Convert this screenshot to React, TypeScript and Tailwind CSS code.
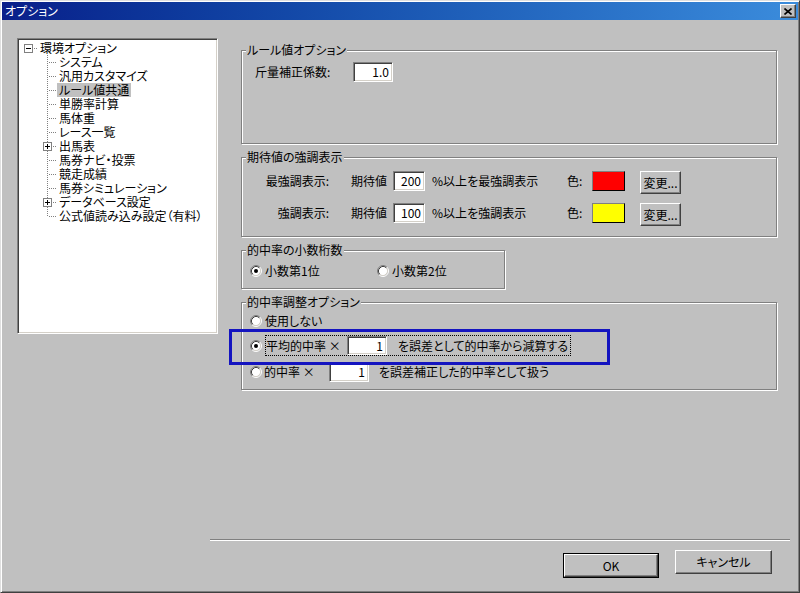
import { ReactNode } from 'react'

// win2k style bevels
const sunken =
  "border border-t-[#808080] border-l-[#808080] border-r-white border-b-white shadow-[inset_1px_1px_0_#404040,inset_-1px_-1px_0_#d4d0c8]"
const raised =
  "border border-t-white border-l-white border-r-[#404040] border-b-[#404040] shadow-[inset_-1px_-1px_0_#808080]"

type Node = { label: string; plus?: boolean; selected?: boolean }

const children: Node[] = [
  { label: "システム" },
  { label: "汎用カスタマイズ" },
  { label: "ルール値共通", selected: true },
  { label: "単勝率計算" },
  { label: "馬体重" },
  { label: "レース一覧" },
  { label: "出馬表", plus: true },
  { label: "馬券ナビ・投票" },
  { label: "競走成績" },
  { label: "馬券シミュレーション" },
  { label: "データベース設定", plus: true },
  { label: "公式値読み込み設定（有料）" },
]

function Radio({ checked }: { checked?: boolean }) {
  return (
    <svg width="12" height="12" viewBox="0 0 12 12" className="shrink-0">
      <circle cx="6" cy="6" r="4.5" fill="#fff" />
      <path d="M2.11 9.89A5.5 5.5 0 0 1 9.89 2.11" stroke="#808080" fill="none" />
      <path d="M9.89 2.11A5.5 5.5 0 0 1 2.11 9.89" stroke="#fff" fill="none" />
      <path d="M2.82 9.18A4.5 4.5 0 0 1 9.18 2.82" stroke="#404040" fill="none" />
      <path d="M9.18 2.82A4.5 4.5 0 0 1 2.82 9.18" stroke="#d4d0c8" fill="none" />
      {checked && <circle cx="6" cy="6" r="2" fill="#000" />}
    </svg>
  )
}

function TreeRow({ node, last }: { node: Node; last: boolean }) {
  return (
    <div className="flex h-[14px] items-center">
      <svg width="38" height="14" viewBox="0 0 38 14" className="shrink-0" shapeRendering="crispEdges">
        <line x1="28.5" y1="0" x2="28.5" y2={last ? 8 : 14} stroke="#808080" strokeDasharray="1 1" />
        <line x1="30" y1="7.5" x2="38" y2="7.5" stroke="#808080" strokeDasharray="1 1" />
        {node.plus && (
          <>
            <rect x="24.5" y="3.5" width="8" height="8" fill="#fff" stroke="#808080" />
            <line x1="26" y1="7.5" x2="31" y2="7.5" stroke="#000" />
            <line x1="28.5" y1="5" x2="28.5" y2="10" stroke="#000" />
          </>
        )}
      </svg>
      <span className={`h-[14px] whitespace-nowrap px-[2px] leading-[14px] ${node.selected ? "bg-[#c0c0c0]" : ""}`}>
        {node.label}
      </span>
    </div>
  )
}

function Tree() {
  return (
    <div className={`mt-[18px] h-[296px] w-[201px] shrink-0 bg-white pl-px pt-[2px] ${sunken}`}>
      <div className="flex h-[14px] items-center">
        <svg width="19" height="14" viewBox="0 0 19 14" className="shrink-0" shapeRendering="crispEdges">
          <rect x="5.5" y="3.5" width="8" height="8" fill="#fff" stroke="#808080" />
          <line x1="7" y1="7.5" x2="12" y2="7.5" stroke="#000" />
          <line x1="15" y1="7.5" x2="19" y2="7.5" stroke="#808080" strokeDasharray="1 1" />
        </svg>
        <span className="px-[2px] leading-[14px]">環境オプション</span>
      </div>
      {children.map((n, i) => (
        <TreeRow key={n.label} node={n} last={i === children.length - 1} />
      ))}
    </div>
  )
}

function Group({ title, className, children }: { title: string; className: string; children?: ReactNode }) {
  return (
    <div className={`border border-[#808080] shadow-[inset_1px_1px_0_#fff,1px_1px_0_#fff] ${className}`}>
      <div className="-mt-[8px] ml-[4px] w-fit bg-[#c0c0c0] px-px leading-[14px] whitespace-nowrap">{title}</div>
      {children}
    </div>
  )
}

function Field({ value, className }: { value: string; className: string }) {
  return (
    <div className={`flex shrink-0 items-center justify-end bg-white pr-[3px] ${sunken} ${className}`}>{value}</div>
  )
}

function Button({ children, className }: { children: ReactNode; className: string }) {
  return <div className={`flex shrink-0 items-center justify-center bg-[#c0c0c0] ${raised} ${className}`}>{children}</div>
}

function HighlightRow({ label, value, text, swatch }: { label: string; value: string; text: string; swatch: string }) {
  return (
    <div className="flex h-[22px] items-start">
      <div className="w-[87px] shrink-0 text-right leading-[20px]">{label}</div>
      <div className="ml-[22px] w-[42px] shrink-0 leading-[20px]">期待値</div>
      <Field value={value} className="h-[20px] w-[32px]" />
      <div className="ml-[7px] w-[135px] shrink-0 whitespace-nowrap leading-[20px]">{text}</div>
      <div className="w-[25px] shrink-0 leading-[20px]">色:</div>
      <div className={`h-[20px] w-[33px] shrink-0 border border-t-[#808080] border-l-[#808080] border-r-black border-b-black ${swatch}`} />
      <Button className="ml-[15px] h-[23px] w-[41px]">変更...</Button>
    </div>
  )
}

export default function App() {
  return (
    <div className="relative flex h-[593px] w-[800px] flex-col border border-t-[#dfdfdf] border-l-[#dfdfdf] border-r-[#404040] border-b-[#404040] bg-[#c0c0c0] p-px font-['Noto_Sans_CJK_JP',sans-serif] text-[12px] leading-[14px] text-black shadow-[inset_1px_1px_0_#fff,inset_-1px_-1px_0_#808080] [font-feature-settings:'palt']">
      {/* title bar */}
      <div className="flex h-[18px] shrink-0 items-center justify-between bg-linear-to-r from-[#0a1e8a] to-[#3b8cdc] pl-[3px] pr-[2px]">
        <span className="text-white">オプション</span>
        <div className={`flex h-[14px] w-[16px] items-center justify-center bg-[#c0c0c0] ${raised}`}>
          <svg width="8" height="7" viewBox="0 0 8 7">
            <path d="M0.5 0.5L7.5 6.5M7.5 0.5L0.5 6.5" stroke="#000" strokeWidth="1.6" />
          </svg>
        </div>
      </div>

      <div className="flex flex-1 items-start pl-[15px]">
        <Tree />

        <div className="ml-[23px] mt-[30px] flex w-[536px] flex-col">
          <Group title="ルール値オプション" className="h-[94px]">
            <div className="ml-[13px] mt-[5px] flex items-center">
              <div className="w-[98px] leading-[20px]">斤量補正係数:</div>
              <Field value="1.0" className="h-[20px] w-[40px]" />
            </div>
          </Group>

          <Group title="期待値の強調表示" className="mt-[13px] h-[80px]">
            <div className="mt-[7px] flex flex-col gap-[10px]">
              <HighlightRow label="最強調表示:" value="200" text="%以上を最強調表示" swatch="bg-[#ff0000]" />
              <HighlightRow label="強調表示:" value="100" text="%以上を強調表示" swatch="bg-[#ffff00]" />
            </div>
          </Group>

          <Group title="的中率の小数桁数" className="mt-[13px] h-[39px] w-[264px]">
            <div className="ml-[8px] mt-[7px] flex items-center">
              <div className="flex w-[127px] items-center gap-[3px]">
                <Radio checked />
                <span>小数第1位</span>
              </div>
              <div className="flex items-center gap-[3px]">
                <Radio />
                <span>小数第2位</span>
              </div>
            </div>
          </Group>

          <Group title="的中率調整オプション" className="mt-[13px] h-[88px]">
            <div className="ml-[8px] mt-[2px] flex flex-col">
              <div className="flex h-[20px] items-center gap-[3px]">
                <Radio />
                <span>使用しない</span>
              </div>
              <div className="mt-[4px] flex h-[21px] items-center gap-[3px]">
                <Radio checked />
                <div className="flex h-[21px] items-center border border-dotted border-black pr-[2px]">
                  <span className="w-[81px] whitespace-nowrap">平均的中率 ×</span>
                  <Field value="1" className="h-[19px] w-[40px]" />
                  <span className="ml-[11px] whitespace-nowrap">を誤差として的中率から減算する</span>
                </div>
              </div>
              <div className="mt-[6px] flex h-[20px] items-center gap-[2px]">
                <Radio />
                <span className="w-[63px] whitespace-nowrap">的中率 ×</span>
                <Field value="1" className="h-[20px] w-[40px]" />
                <span className="ml-[8px] whitespace-nowrap">を誤差補正した的中率として扱う</span>
              </div>
            </div>
          </Group>
        </div>
      </div>

      {/* footer */}
      <div className="h-[52px] shrink-0 pl-[208px]">
        <div className="h-[2px] w-[580px] border-t border-b border-t-[#808080] border-b-white" />
        <div className="flex items-start">
          <div className="ml-[353px] mt-[12px] h-[25px] w-[96px] border border-black">
            <Button className="h-full w-full">OK</Button>
          </div>
          <Button className="ml-[16px] mt-[9px] h-[24px] w-[97px]">キャンセル</Button>
        </div>
      </div>

      {/* annotation */}
      <div className="absolute left-[228px] top-[328px] h-[36px] w-[381px] border-[3px] border-[#1414c0]" />
    </div>
  )
}
